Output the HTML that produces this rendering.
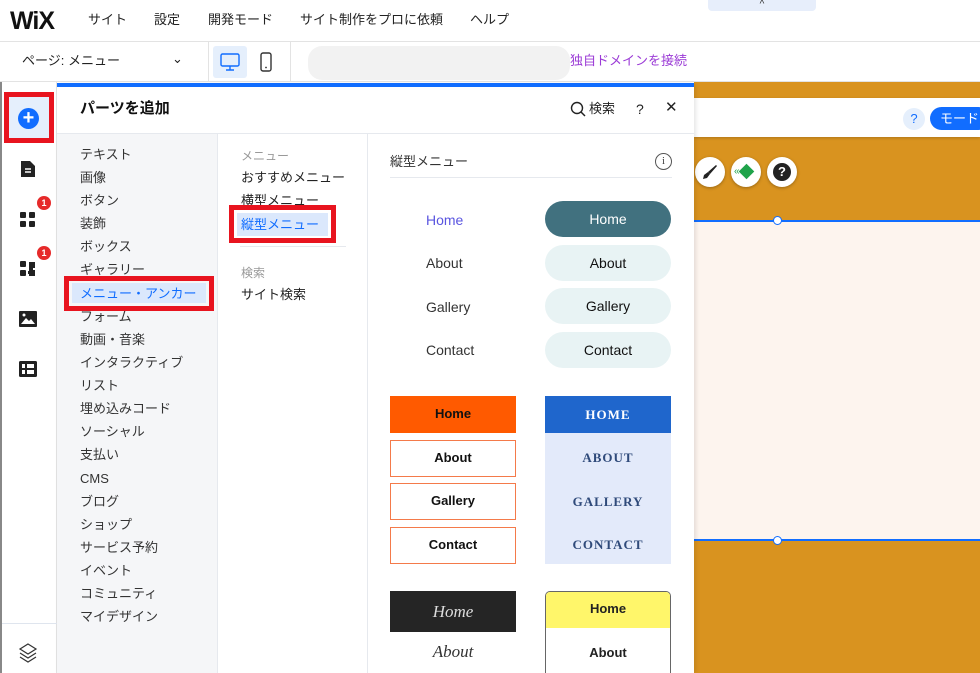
<!DOCTYPE html>
<html><head><meta charset="utf-8"><style>
*{margin:0;padding:0;box-sizing:border-box}
html,body{width:980px;height:673px;overflow:hidden}
body{position:relative;background:#fff;font-family:"Liberation Sans","Noto Sans CJK JP",sans-serif;color:#222}
.a{position:absolute}
.t{position:absolute;font-size:13px;white-space:nowrap;line-height:18px}
.c1 .t{left:80px;color:#333}
.red{position:absolute;border:5px solid #e8141f}
.pill{position:absolute;left:545px;width:126px;height:36px;border-radius:18px;background:#e8f3f4;font-size:14px;text-align:center;line-height:36px;color:#111}
.ob{position:absolute;left:390px;width:126px;height:37px;border:1.5px solid #f47a4a;font-weight:bold;font-size:13px;text-align:center;line-height:34px;color:#111}
.bl{position:absolute;left:545px;width:126px;text-align:center;font-family:"Liberation Serif",serif;font-weight:bold;font-size:13px;color:#2f4a7a;letter-spacing:1px}
.circ{position:absolute;top:157px;width:30px;height:30px;border-radius:50%;background:#fff;box-shadow:0 1px 3px rgba(0,0,0,.3)}
</style></head><body>
<div class="a" style="left:0;top:0;width:980px;height:42px;border-bottom:1px solid #e3e3e3"></div>
<div class="t" style="left:10px;top:7px;font-size:25px;font-weight:bold;line-height:28px;letter-spacing:-1px;color:#111">WiX</div>
<div class="t" style="left:88px;top:11px">サイト</div>
<div class="t" style="left:154px;top:11px">設定</div>
<div class="t" style="left:208px;top:11px">開発モード</div>
<div class="t" style="left:300px;top:11px">サイト制作をプロに依頼</div>
<div class="t" style="left:470px;top:11px">ヘルプ</div>
<div class="a" style="left:708px;top:0;width:108px;height:11px;background:#e7eefb;border-radius:0 0 4px 4px;font-size:10px;text-align:center;line-height:9px;color:#333">^</div>
<div class="a" style="left:0;top:42px;width:980px;height:40px;border-bottom:1px solid #e3e3e3"></div>
<div class="t" style="left:22px;top:52px">ページ: メニュー</div>
<div class="t" style="left:172px;top:50px;font-size:13px">⌄</div>
<div class="a" style="left:208px;top:42px;width:1px;height:40px;background:#e3e3e3"></div>
<div class="a" style="left:290px;top:42px;width:1px;height:40px;background:#e3e3e3"></div>
<div class="a" style="left:213px;top:46px;width:34px;height:32px;background:#e5effc;border-radius:3px"></div>
<svg class="a" style="left:219px;top:51px" width="22" height="22" viewBox="0 0 22 22"><rect x="2" y="3" width="18" height="12" rx="1.5" fill="none" stroke="#116dff" stroke-width="1.4"/><path d="M11 15v4M7 19h8" stroke="#116dff" stroke-width="1.4"/></svg>
<svg class="a" style="left:258px;top:51px" width="16" height="22" viewBox="0 0 16 22"><rect x="3" y="2" width="10" height="18" rx="2" fill="none" stroke="#333" stroke-width="1.4"/><circle cx="8" cy="16.5" r="0.9" fill="#333"/></svg>
<div class="a" style="left:308px;top:46px;width:262px;height:34px;background:#ececec;border-radius:14px;opacity:.7"></div>
<div class="t" style="left:570px;top:52px;color:#9b3bd6">独自ドメインを接続</div>
<div class="a" style="left:694px;top:82px;width:286px;height:591px;background:#d9931f"></div>
<div class="a" style="left:694px;top:98px;width:286px;height:39px;background:#fff;box-shadow:0 1px 3px rgba(0,0,0,.2)"></div>
<div class="a" style="left:903px;top:108px;width:22px;height:22px;border-radius:50%;background:#e5effc;color:#116dff;font-size:13px;text-align:center;line-height:22px">?</div>
<div class="a" style="left:930px;top:107px;width:60px;height:23px;border-radius:12px;background:#116dff;color:#fff;font-size:13px;line-height:23px;padding-left:10px;white-space:nowrap">モード</div>
<div class="circ" style="left:695px"></div>
<svg class="a" style="left:701px;top:163px" width="18" height="18"><path d="M15 2l1 1-7 8-2-2z" fill="#222"/><path d="M7 9l2 2-3 4-4 1 1-4z" fill="#222"/></svg>
<div class="circ" style="left:731px"></div>
<div class="a" style="left:741px;top:166px;width:11px;height:11px;background:#1fa34a;transform:rotate(45deg)"></div>
<div class="t" style="left:734px;top:163px;font-size:10px;color:#1fa34a">«</div>
<div class="circ" style="left:767px"></div>
<div class="a" style="left:773px;top:163px;width:18px;height:18px;border-radius:50%;background:#222;color:#fff;font-size:13px;font-weight:bold;text-align:center;line-height:18px">?</div>
<div class="a" style="left:694px;top:222px;width:286px;height:318px;background:#fdf4ee"></div>
<div class="a" style="left:694px;top:220px;width:286px;height:2px;background:#116dff"></div>
<div class="a" style="left:694px;top:539px;width:286px;height:2px;background:#116dff"></div>
<div class="a" style="left:773px;top:216px;width:9px;height:9px;border-radius:50%;background:#fff;border:1.5px solid #116dff"></div>
<div class="a" style="left:773px;top:536px;width:9px;height:9px;border-radius:50%;background:#fff;border:1.5px solid #116dff"></div>
<div class="a" style="left:0;top:82px;width:2px;height:591px;background:#888"></div>
<div class="a" style="left:2px;top:82px;width:55px;height:591px;background:#fff;border-right:1px solid #e3e3e3"></div>
<div class="a" style="left:9px;top:97px;width:40px;height:41px;background:#e5effc"></div>
<div class="a" style="left:18px;top:108px;width:21px;height:21px;border-radius:50%;background:#116dff;color:#fff;font-size:20px;font-weight:bold;text-align:center;line-height:21px">+</div>
<svg class="a" style="left:19px;top:159px" width="18" height="20"><path d="M2 2h9l5 5v11H2z" fill="#222"/><path d="M6 10h6M6 13h6" stroke="#fff" stroke-width="1.5"/></svg>
<svg class="a" style="left:19px;top:211px" width="18" height="18"><rect x="1" y="1" width="6" height="6" rx="1" fill="#222"/><rect x="10" y="1" width="6" height="6" rx="1" fill="#222"/><rect x="1" y="10" width="6" height="6" rx="1" fill="#222"/><rect x="10" y="10" width="6" height="6" rx="1" fill="#222"/></svg>
<svg class="a" style="left:19px;top:260px" width="18" height="18"><rect x="1" y="1" width="6" height="6" rx="1" fill="#222"/><rect x="1" y="10" width="6" height="6" rx="1" fill="#222"/><path d="M10 2h6v6h-2v2h2v6h-6v-2h-1v-3h1z" fill="#222"/></svg>
<div class="a" style="left:37px;top:196px;width:14px;height:14px;border-radius:50%;background:#e62a2a;color:#fff;font-size:9px;font-weight:bold;text-align:center;line-height:14px">1</div>
<div class="a" style="left:37px;top:246px;width:14px;height:14px;border-radius:50%;background:#e62a2a;color:#fff;font-size:9px;font-weight:bold;text-align:center;line-height:14px">1</div>
<svg class="a" style="left:19px;top:311px" width="18" height="16"><rect x="0" y="0" width="18" height="16" rx="1" fill="#222"/><path d="M2 13l5-6 3 3 2-2 4 5z" fill="#fff"/><circle cx="5" cy="4" r="1.5" fill="#fff"/></svg>
<svg class="a" style="left:19px;top:361px" width="18" height="16"><rect x="0" y="0" width="18" height="16" rx="1.5" fill="#222"/><rect x="3" y="3" width="3" height="4" fill="#fff"/><rect x="8" y="3" width="7" height="4" fill="#fff"/><rect x="3" y="9" width="3" height="4" fill="#fff"/><rect x="8" y="9" width="7" height="4" fill="#fff"/></svg>
<div class="a" style="left:2px;top:623px;width:55px;height:1px;background:#dfe5ee"></div>
<svg class="a" style="left:18px;top:642px" width="20" height="22" viewBox="0 0 20 22"><path d="M10 2l8 5-8 5-8-5z M2 11l8 5 8-5 M2 15l8 5 8-5" fill="none" stroke="#333" stroke-width="1.2"/></svg>
<div class="a" style="left:57px;top:84px;width:637px;height:589px;background:#fff;box-shadow:2px 0 4px rgba(0,0,0,.1)"></div>
<div class="a" style="left:57px;top:83px;width:637px;height:4px;background:#116dff"></div>
<div class="t" style="left:80px;top:100px;font-size:15px;font-weight:bold;color:#111">パーツを追加</div>
<svg class="a" style="left:570px;top:101px" width="16" height="16"><circle cx="7" cy="7" r="5.5" fill="none" stroke="#222" stroke-width="1.4"/><path d="M11 11l4 4" stroke="#222" stroke-width="1.5"/></svg>
<div class="t" style="left:589px;top:100px;font-size:13px">検索</div>
<div class="t" style="left:636px;top:100px;font-size:14px">?</div>
<div class="t" style="left:665px;top:99px;font-size:15px">✕</div>
<div class="a" style="left:57px;top:133px;width:637px;height:1px;background:#e6e9ee"></div>
<div class="a" style="left:57px;top:134px;width:161px;height:539px;background:#f5f6f8;border-right:1px solid #e6e9ee"></div>
<div class="a" style="left:367px;top:134px;width:1px;height:539px;background:#e6e9ee"></div>
<div class="c1">
<div class="t" style="top:146px">テキスト</div>
<div class="t" style="top:169px">画像</div>
<div class="t" style="top:192px">ボタン</div>
<div class="t" style="top:215px">装飾</div>
<div class="t" style="top:238px">ボックス</div>
<div class="t" style="top:261px">ギャラリー</div>
<div class="a" style="left:72px;top:283px;width:134px;height:20px;background:#dbe8fc"></div>
<div class="t" style="top:285px;color:#116dff">メニュー・アンカー</div>
<div class="t" style="top:308px">フォーム</div>
<div class="t" style="top:331px">動画・音楽</div>
<div class="t" style="top:354px">インタラクティブ</div>
<div class="t" style="top:377px">リスト</div>
<div class="t" style="top:400px">埋め込みコード</div>
<div class="t" style="top:423px">ソーシャル</div>
<div class="t" style="top:446px">支払い</div>
<div class="t" style="top:470px">CMS</div>
<div class="t" style="top:493px">ブログ</div>
<div class="t" style="top:516px">ショップ</div>
<div class="t" style="top:539px">サービス予約</div>
<div class="t" style="top:562px">イベント</div>
<div class="t" style="top:585px">コミュニティ</div>
<div class="t" style="top:608px">マイデザイン</div>
</div>
<div class="red" style="left:64px;top:276px;width:150px;height:35px"></div>
<div class="red" style="left:4px;top:92px;width:50px;height:51px"></div>
<div class="t" style="left:241px;top:147px;font-size:12px;color:#999">メニュー</div>
<div class="t" style="left:241px;top:169px">おすすめメニュー</div>
<div class="t" style="left:241px;top:192px">横型メニュー</div>
<div class="a" style="left:237px;top:213px;width:91px;height:23px;background:#dbe8fc"></div>
<div class="t" style="left:241px;top:216px;color:#116dff">縦型メニュー</div>
<div class="a" style="left:240px;top:246px;width:106px;height:1px;background:#e6e9ee"></div>
<div class="t" style="left:241px;top:264px;font-size:12px;color:#999">検索</div>
<div class="t" style="left:241px;top:286px">サイト検索</div>
<div class="red" style="left:229px;top:205px;width:107px;height:38px"></div>
<div class="t" style="left:390px;top:153px;color:#333">縦型メニュー</div>
<div class="a" style="left:655px;top:153px;width:17px;height:17px;border-radius:50%;border:1px solid #555;font-size:11px;text-align:center;line-height:15px;font-family:'Liberation Serif',serif;color:#444">i</div>
<div class="a" style="left:390px;top:177px;width:282px;height:1px;background:#e6e9ee"></div>
<div class="t" style="left:426px;top:211px;font-size:14px;color:#5a55e0">Home</div>
<div class="t" style="left:426px;top:254px;font-size:14px;color:#333">About</div>
<div class="t" style="left:426px;top:298px;font-size:14px;color:#333">Gallery</div>
<div class="t" style="left:426px;top:341px;font-size:14px;color:#333">Contact</div>
<div class="pill" style="top:201px;background:#41717f;color:#fff">Home</div>
<div class="pill" style="top:245px">About</div>
<div class="pill" style="top:288px">Gallery</div>
<div class="pill" style="top:332px">Contact</div>
<div class="ob" style="top:396px;background:#ff5a00;border-color:#ff5a00">Home</div>
<div class="ob" style="top:440px">About</div>
<div class="ob" style="top:483px">Gallery</div>
<div class="ob" style="top:527px">Contact</div>
<div class="a" style="left:545px;top:396px;width:126px;height:168px;background:#e3eafa"></div>
<div class="a" style="left:545px;top:396px;width:126px;height:37px;background:#1f66cc"></div>
<div class="bl" style="top:407px;color:#fff">HOME</div>
<div class="bl" style="top:450px">ABOUT</div>
<div class="bl" style="top:494px">GALLERY</div>
<div class="bl" style="top:537px">CONTACT</div>
<div class="a" style="left:390px;top:591px;width:126px;height:41px;background:#252525;color:#ddd;font-family:'Liberation Serif',serif;font-style:italic;font-size:17px;text-align:center;line-height:41px">Home</div>
<div class="a" style="left:390px;top:642px;width:126px;font-family:'Liberation Serif',serif;font-style:italic;font-size:17px;text-align:center;color:#333">About</div>
<div class="a" style="left:545px;top:591px;width:126px;height:90px;border:1.5px solid #666;border-radius:5px;background:#fff;overflow:hidden">
<div style="height:36px;background:#fff66a;text-align:center;line-height:34px;font-size:13px;font-weight:bold;color:#222">Home</div>
<div style="text-align:center;line-height:50px;font-size:13px;font-weight:bold;color:#222">About</div>
</div>
</body></html>
